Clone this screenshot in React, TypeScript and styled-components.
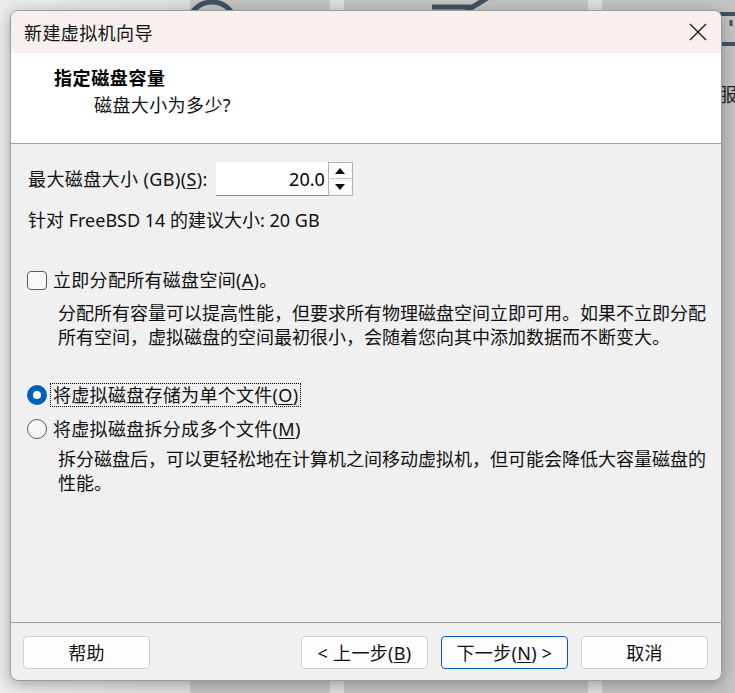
import React from "react";
import styled, { createGlobalStyle } from "styled-components";

const GlobalStyle = createGlobalStyle`
  html, body { margin: 0; padding: 0; }
  body {
    background: #e4e4e4;
    font-family: "Noto Sans", "Noto Sans CJK SC", sans-serif;
    color: #000;
  }
  #root { width: 735px; height: 693px; overflow: hidden; }
`;

const Desktop = styled.div`
  position: relative;
  width: 735px;
  height: 693px;
  overflow: hidden;
  background: linear-gradient(90deg, #ebebeb 0px, #dedede 192px);
`;

const BackTiles = styled.div`
  display: flex;
  height: 693px;
  padding-left: 190px;
  gap: 14px;
  box-sizing: border-box;
`;

const Tile = styled.div<{ $w: number }>`
  position: relative;
  flex: 0 0 ${(p) => p.$w}px;
  background: #c3c3c3;
  overflow: hidden;
`;

const PeekText = styled.span`
  position: absolute;
  left: 116px;
  top: 82px;
  font-size: 19px;
  line-height: 24px;
  font-family: "Noto Sans CJK SC", sans-serif;
  color: #222;
`;

const Window = styled.div`
  position: absolute;
  left: 10px;
  top: 10px;
  width: 712px;
  height: 671px;
  box-sizing: border-box;
  border: 1px solid #9c9c9c;
  border-radius: 8px;
  overflow: hidden;
  display: flex;
  flex-direction: column;
  background: #f0f0f0;
  box-shadow: 0 3px 14px rgba(0, 0, 0, 0.3);
`;

const TitleBar = styled.div`
  height: 42px;
  flex: 0 0 42px;
  display: flex;
  align-items: center;
  justify-content: space-between;
  background: #f8f0ee;
  padding-left: 13px;
`;

const TitleText = styled.span`
  font-family: "Noto Sans CJK SC", sans-serif;
  font-size: 18px;
  letter-spacing: 0.4px;
  line-height: 24px;
  color: #111;
`;

const CloseButton = styled.div`
  width: 46px;
  height: 42px;
  display: flex;
  align-items: center;
  justify-content: center;
`;

const Header = styled.div`
  height: 91px;
  flex: 0 0 91px;
  box-sizing: border-box;
  background: #fff;
  border-bottom: 1px solid #a0a0a0;
  padding: 12px 0 0 43px;
`;

const HeaderTitle = styled.div`
  font-family: "Noto Sans CJK SC", sans-serif;
  font-weight: 700;
  font-size: 18px;
  letter-spacing: 0.6px;
  line-height: 24px;
`;

const HeaderSub = styled.div`
  font-size: 18px;
  letter-spacing: 0.4px;
  line-height: 24px;
  margin-top: 4px;
  padding-left: 40px;
  color: #111;
`;

const Content = styled.div`
  flex: 1;
  padding: 18px 0 0 16px;
  border-bottom: 1px solid #a0a0a0;
  display: flex;
  flex-direction: column;
`;

const SizeRow = styled.div`
  display: flex;
  align-items: center;
  height: 34px;
  padding-left: 1px;
`;

const Label = styled.span`
  font-size: 18px;
  letter-spacing: 0.4px;
  line-height: 24px;
  color: #111;
`;

const Spin = styled.div`
  display: flex;
  margin-left: 8px;
  height: 34px;
  box-sizing: border-box;
`;

const SpinInput = styled.div`
  width: 112px;
  height: 34px;
  box-sizing: border-box;
  background: #fff;
  border-bottom: 1px solid #8a8a8a;
  display: flex;
  align-items: center;
  justify-content: flex-end;
  padding-right: 3px;
  font-size: 18px;
  line-height: 24px;
`;

const SpinButtons = styled.div`
  width: 25px;
  height: 34px;
  box-sizing: border-box;
  border: 1px solid #b4b4b4;
  background: #f6f6f6;
  display: flex;
  flex-direction: column;
`;

const SpinBtn = styled.div<{ $top?: boolean }>`
  flex: 1;
  display: flex;
  align-items: center;
  justify-content: center;
  border-bottom: ${(p) => (p.$top ? "1px solid #c8c8c8" : "none")};
  background: #fdfdfd;
  margin: 1px;
`;

const Suggest = styled.div`
  margin-top: 12px;
  padding-left: 1px;
  font-size: 18px;
  line-height: 24px;
  color: #111;
`;

const OptionRow = styled.div<{ $mt: number }>`
  display: flex;
  align-items: center;
  height: 24px;
  margin-top: ${(p) => p.$mt}px;
`;

const CheckBox = styled.div`
  width: 20px;
  height: 19px;
  box-sizing: border-box;
  border: 1px solid #5c5c5c;
  border-radius: 4px;
  background: #f8f8f8;
  flex: 0 0 auto;
`;

const Radio = styled.div<{ $checked?: boolean }>`
  width: 20px;
  height: 20px;
  box-sizing: border-box;
  border-radius: 50%;
  flex: 0 0 auto;
  display: flex;
  align-items: center;
  justify-content: center;
  background: ${(p) => (p.$checked ? "#005fb8" : "#f6f6f6")};
  border: ${(p) => (p.$checked ? "none" : "1px solid #5c5c5c")};
  &::after {
    content: "";
    display: ${(p) => (p.$checked ? "block" : "none")};
    width: 8px;
    height: 8px;
    border-radius: 50%;
    background: #fff;
  }
`;

const OptionLabel = styled.span<{ $focus?: boolean }>`
  margin-left: ${(p) => (p.$focus ? 4 : 6)}px;
  padding: 0 ${(p) => (p.$focus ? 2 : 0)}px;
  font-size: 18px;
  letter-spacing: 0.3px;
  line-height: 22px;
  color: #111;
  white-space: nowrap;
  outline: ${(p) => (p.$focus ? "1px dotted #000" : "none")};
`;

const Desc = styled.p<{ $mt: number }>`
  margin: ${(p) => p.$mt}px 0 0 31px;
  font-size: 18px;
  letter-spacing: 0;
  line-height: 24px;
  color: #111;
  white-space: nowrap;
`;

const U = styled.span`
  text-decoration: underline;
  text-underline-offset: 2px;
`;

const Footer = styled.div`
  flex: 0 0 57px;
  height: 57px;
  display: flex;
  align-items: flex-start;
  padding: 13px 13px 0 12px;
  box-sizing: border-box;
  gap: 13px;
`;

const Button = styled.div<{ $primary?: boolean; $push?: boolean }>`
  width: 127px;
  height: 33px;
  box-sizing: border-box;
  border: 1px solid ${(p) => (p.$primary ? "#005fb8" : "#d0d0d0")};
  border-radius: 4px;
  background: #fdfdfd;
  display: flex;
  align-items: center;
  justify-content: center;
  font-size: 18px;
  letter-spacing: 0.3px;
  line-height: 22px;
  color: #111;
  margin-left: ${(p) => (p.$push ? "auto" : "0")};
`;

export default function App() {
  return (
    <>
      <GlobalStyle />
      <Desktop>
        <BackTiles>
          <Tile $w={140}>
            <svg width="140" height="60" style={{ display: "block" }}>
              <circle cx="22" cy="26" r="24" fill="none" stroke="#3d5262" strokeWidth="5" />
            </svg>
          </Tile>
          <Tile $w={244}>
            <svg width="244" height="40" style={{ display: "block" }}>
              <path d="M88 7 L128 7 M122 11 L150 -6" stroke="#3d5262" strokeWidth="5" fill="none" />
            </svg>
          </Tile>
          <Tile $w={140}>
            <svg width="140" height="60" style={{ display: "block" }}>
              <path d="M118 14 L140 14 M118 44 L140 44" stroke="#3d5262" strokeWidth="4" fill="none" />
              <path d="M129 20 L129 26" stroke="#3d5262" strokeWidth="3" fill="none" />
            </svg>
            <PeekText>服</PeekText>
          </Tile>
        </BackTiles>

        <Window>
          <TitleBar>
            <TitleText>新建虚拟机向导</TitleText>
            <CloseButton>
              <svg width="18" height="18" viewBox="0 0 18 18">
                <path d="M1 1 L17 17 M17 1 L1 17" stroke="#1a1a1a" strokeWidth="1.4" fill="none" />
              </svg>
            </CloseButton>
          </TitleBar>

          <Header>
            <HeaderTitle>指定磁盘容量</HeaderTitle>
            <HeaderSub>磁盘大小为多少?</HeaderSub>
          </Header>

          <Content>
            <SizeRow>
              <Label>
                最大磁盘大小 (GB)(<U>S</U>):
              </Label>
              <Spin>
                <SpinInput>20.0</SpinInput>
                <SpinButtons>
                  <SpinBtn $top>
                    <svg width="10" height="6" viewBox="0 0 10 6">
                      <path d="M0 6 L5 0 L10 6 Z" fill="#111" />
                    </svg>
                  </SpinBtn>
                  <SpinBtn>
                    <svg width="10" height="6" viewBox="0 0 10 6">
                      <path d="M0 0 L10 0 L5 6 Z" fill="#111" />
                    </svg>
                  </SpinBtn>
                </SpinButtons>
              </Spin>
            </SizeRow>

            <Suggest>针对 FreeBSD 14 的建议大小: 20 GB</Suggest>

            <OptionRow $mt={36}>
              <CheckBox />
              <OptionLabel>
                立即分配所有磁盘空间(<U>A</U>)。
              </OptionLabel>
            </OptionRow>
            <Desc $mt={9}>
              分配所有容量可以提高性能，但要求所有物理磁盘空间立即可用。如果不立即分配
              <br />
              所有空间，虚拟磁盘的空间最初很小，会随着您向其中添加数据而不断变大。
            </Desc>

            <OptionRow $mt={34}>
              <Radio $checked />
              <OptionLabel $focus>
                将虚拟磁盘存储为单个文件(<U>O</U>)
              </OptionLabel>
            </OptionRow>
            <OptionRow $mt={10}>
              <Radio />
              <OptionLabel>
                将虚拟磁盘拆分成多个文件(<U>M</U>)
              </OptionLabel>
            </OptionRow>
            <Desc $mt={6}>
              拆分磁盘后，可以更轻松地在计算机之间移动虚拟机，但可能会降低大容量磁盘的
              <br />
              性能。
            </Desc>
          </Content>

          <Footer>
            <Button>帮助</Button>
            <Button $push>
              &lt; 上一步(<U>B</U>)
            </Button>
            <Button $primary>
              下一步(<U>N</U>) &gt;
            </Button>
            <Button>取消</Button>
          </Footer>
        </Window>
      </Desktop>
    </>
  );
}
